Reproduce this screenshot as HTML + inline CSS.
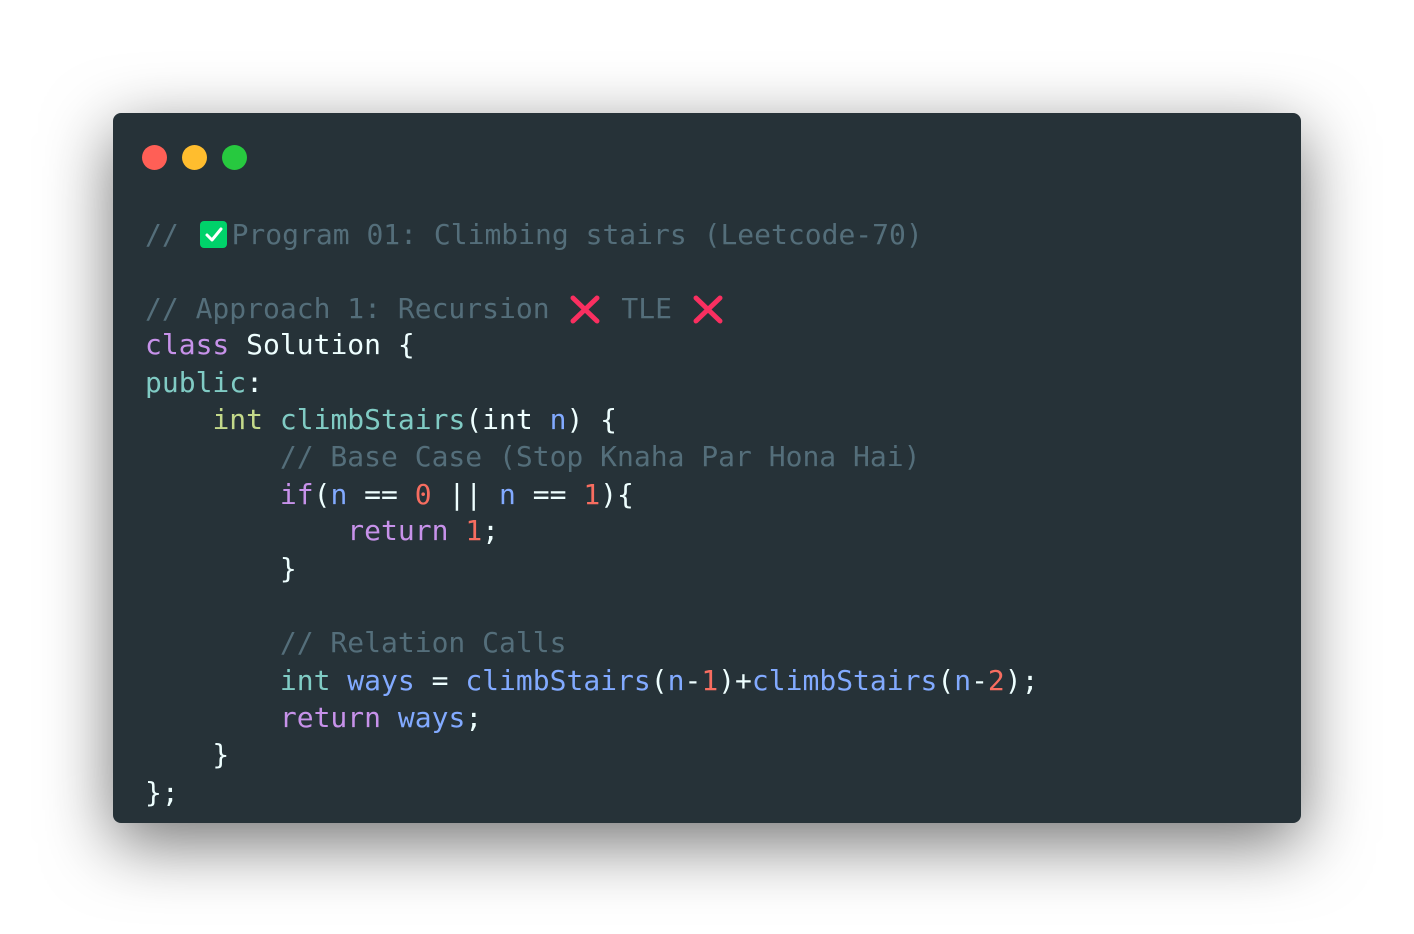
<!DOCTYPE html>
<html><head><meta charset="utf-8"><style>
html,body{margin:0;padding:0;width:1414px;height:934px;background:#fff;overflow:hidden}
.win{position:absolute;left:113px;top:113px;width:1188px;height:710px;background:#263238;border-radius:8px;box-shadow:0 20px 68px rgba(0,0,0,0.55)}
.dot{position:absolute;top:145px;width:25px;height:25px;border-radius:50%}
.l{position:absolute;left:145px;height:37px;line-height:37px;font-family:"DejaVu Sans Mono","Liberation Mono",monospace;font-size:28px;color:#eeffff;white-space:pre}
.c{color:#546e7a}.k{color:#c792ea}.t{color:#80cbc4}.y{color:#c3d98a}.b{color:#82aaff}.n{color:#f76d60}.f{color:#80cbc4}
.chk{display:inline-block;width:27px;height:27px;background:#00d26a;border-radius:4px;vertical-align:-4px;position:relative;margin-left:4px;margin-right:5px}
</style></head><body>
<div class="win"></div>
<div class="dot" style="left:142px;background:#ff5f56"></div>
<div class="dot" style="left:182px;background:#ffbd2e"></div>
<div class="dot" style="left:222px;background:#27c93f"></div>
<div class="l c" style="top:216px">// <span class="chk"><svg width="27" height="27" viewBox="0 0 27 27" style="position:absolute;left:0;top:0"><path d="M7 14 L12 19 L21 8" stroke="#fff" stroke-width="3" fill="none" stroke-linecap="round" stroke-linejoin="round"/></svg></span>Program 01: Climbing stairs (Leetcode-70)</div>
<div class="l c" style="top:290px">// Approach 1: Recursion<svg width="34" height="30" viewBox="0 0 34 30" style="vertical-align:-6px;margin-left:17px"><path d="M6 4 L30 27 M30 4 L6 27" stroke="#f92f60" stroke-width="5" stroke-linecap="round"/></svg><span style="margin-left:4px"> TLE</span><svg width="34" height="30" viewBox="0 0 34 30" style="vertical-align:-6px;margin-left:18px"><path d="M6 4 L30 27 M30 4 L6 27" stroke="#f92f60" stroke-width="5" stroke-linecap="round"/></svg></div>
<div class="l" style="top:326px"><span class="k">class</span> Solution {</div>
<div class="l" style="top:364px"><span class="t">public</span>:</div>
<div class="l" style="top:401px">    <span class="y">int</span> <span class="f">climbStairs</span>(int <span class="b">n</span>) {</div>
<div class="l c" style="top:438px">        // Base Case (Stop Knaha Par Hona Hai)</div>
<div class="l" style="top:476px">        <span class="k">if</span>(<span class="b">n</span> == <span class="n">0</span> || <span class="b">n</span> == <span class="n">1</span>){</div>
<div class="l" style="top:512px">            <span class="k">return</span> <span class="n">1</span>;</div>
<div class="l" style="top:550px">        }</div>
<div class="l c" style="top:624px">        // Relation Calls</div>
<div class="l" style="top:662px">        <span class="t">int</span> <span class="b">ways</span> = <span class="b">climbStairs</span>(<span class="b">n</span>-<span class="n">1</span>)+<span class="b">climbStairs</span>(<span class="b">n</span>-<span class="n">2</span>);</div>
<div class="l" style="top:699px">        <span class="k">return</span> <span class="b">ways</span>;</div>
<div class="l" style="top:736px">    }</div>
<div class="l" style="top:774px">};</div>
</body></html>
